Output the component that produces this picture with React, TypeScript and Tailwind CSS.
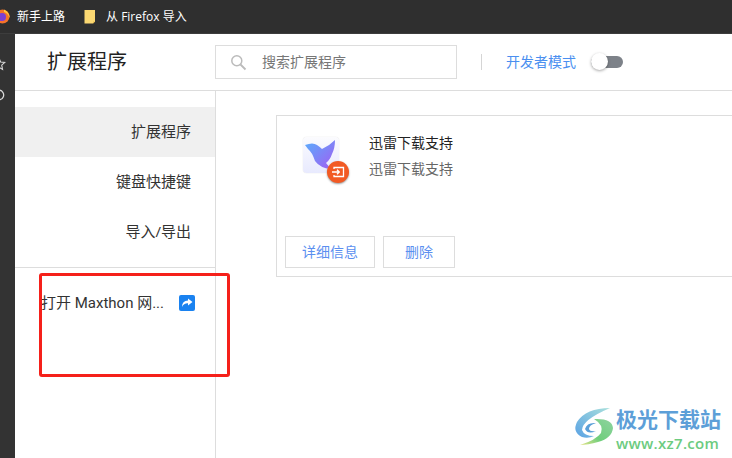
const font = {
  fontFamily: '"Open Sans", "Noto Sans CJK SC", sans-serif',
};

const BirdIcon = () => (
  <div className="relative w-[46px] h-[48px]">
    <div className="w-[36px] h-[36px] rounded-[4px] bg-gradient-to-b from-[#fbfbfe] to-[#e8eafe] shadow-[0_0_1px_#ccc]" />
    <svg className="absolute left-0 top-0" width="36" height="36" viewBox="0 0 36 36">
      <defs>
        <linearGradient id="bird" x1="0" y1="0" x2="1" y2="1">
          <stop offset="0" stopColor="#58aefc" />
          <stop offset="1" stopColor="#a35cf2" />
        </linearGradient>
      </defs>
      <path
        d="M2 8 Q10 5 14 8 Q17 10 19 12 Q26 9 32 3 Q32 11 29 17 Q27 23 23 26 L28 32 Q17 31 12 24 Q9 15 5 12 Z"
        fill="url(#bird)"
      />
    </svg>
    <div className="absolute left-[24px] top-[24px] w-[22px] h-[22px] rounded-full bg-[#f25a24] shadow-[0_1px_2px_#999] flex items-center justify-center">
      <svg width="14" height="12" viewBox="0 0 14 12" fill="none" stroke="#fff" strokeWidth="1.3">
        <path d="M3 3 V1.5 H12.5 V10.5 H3 V9" />
        <path d="M1 6 H8 M6 3.8 L8.3 6 L6 8.2" />
      </svg>
    </div>
  </div>
);

const App = () => {
  return (
    <div
      className="relative w-[732px] h-[458px] overflow-hidden bg-white flex flex-col"
      style={font}
    >
      {/* bookmark bar */}
      <div className="h-[34px] shrink-0 bg-[#2f2f2f] border-b border-[#3d3d3d] flex items-center text-white text-[12px]">
        <svg className="ml-[-5px]" width="15" height="15" viewBox="0 0 15 15">
          <circle cx="7.5" cy="7.5" r="7" fill="#f5732a" />
          <circle cx="7" cy="8" r="4" fill="#7b3fd6" />
          <path d="M9 0.5 Q15 4 14.5 9 Q13 4 9 3 Z" fill="#ffc93c" />
        </svg>
        <span className="ml-[7px]">新手上路</span>
        <svg className="ml-[19px]" width="12" height="15" viewBox="0 0 12 15">
          <path d="M0.5 1 H11 V12.5 L9 14.5 H0.5 Z" fill="#fbd872" />
          <path d="M9 14.5 V12.5 H11 Z" fill="#e8b94a" />
        </svg>
        <span className="ml-[10px]">从 Firefox 导入</span>
      </div>

      <div className="flex-1 flex min-h-0">
        {/* browser side strip */}
        <div className="w-[15px] shrink-0 bg-[#333333] flex flex-col items-end pt-[23px] gap-[17px] overflow-hidden">
          <svg className="mr-[9px] shrink-0" width="14" height="14" viewBox="0 0 12 13" fill="none" stroke="#d8d8d8" strokeWidth="1">
            <path d="M6 1 L7.5 4.6 L11.4 5 L8.5 7.6 L9.3 11.5 L6 9.5 L2.7 11.5 L3.5 7.6 L0.6 5 L4.5 4.6 Z" />
          </svg>
          <svg className="mr-[9px] shrink-0" width="14" height="14" viewBox="0 0 12 13" fill="none" stroke="#d8d8d8" strokeWidth="1.2">
            <path d="M6 1.5 V6 H1.5 M6 2 A4.5 4.5 0 1 1 3 10" />
          </svg>
        </div>

        <div className="flex-1 flex flex-col min-w-0">
          {/* header */}
          <div className="h-[57px] shrink-0 border-b border-[#dddddd] flex items-center">
            <div className="w-[200px] shrink-0 pl-[32px] text-[20px] leading-[28px] text-[#222222]">
              扩展程序
            </div>
            <div className="w-[242px] h-[34px] shrink-0 border border-[#dddddd] flex items-center pl-[14px]">
              <svg width="17" height="17" viewBox="0 0 17 17" fill="none" stroke="#bbbbbb" strokeWidth="1.5">
                <circle cx="6.8" cy="6.8" r="5" />
                <path d="M10.5 10.5 L15.5 15.5" strokeWidth="1.8" />
              </svg>
              <span className="ml-[15px] pb-[2px] text-[14px] text-[#777777]">搜索扩展程序</span>
            </div>
            <div className="ml-[24px] w-px h-[16px] bg-[#d5d5d5]" />
            <span className="ml-[24px] pb-[2px] text-[14px] text-[#4a8ff0]">开发者模式</span>
            {/* toggle */}
            <div className="relative ml-[15px] w-[32px] h-[12px] rounded-full bg-[#7d8289]">
              <div className="absolute left-0 top-[-3px] w-[17px] h-[17px] rounded-full bg-white shadow-[0_1px_3px_rgba(0,0,0,0.35)]" />
            </div>
          </div>

          <div className="flex-1 flex min-h-0">
            {/* sidebar */}
            <div className="w-[201px] shrink-0 border-r border-[#dddddd] pt-[16px] text-[15px] text-[#333333]">
              <div className="h-[50px] bg-[#f0f0f0] flex items-center justify-end pr-[24px] pb-[2px]">扩展程序</div>
              <div className="h-[50px] flex items-center justify-end pr-[24px] pb-[2px]">键盘快捷键</div>
              <div className="h-[50px] flex items-center justify-end pr-[24px] pb-[2px]">导入/导出</div>
              <div className="mt-[10px] border-t border-[#dddddd] h-[70px] flex items-center pl-[26px]">
                <span
                  className="w-[138px] pt-[2px] whitespace-nowrap overflow-hidden font-['Roboto','Noto_Sans_CJK_SC',sans-serif]"
                >
                  打开 Maxthon 网...
                </span>
                <div className="w-[16px] h-[16px] rounded-[2px] bg-[#1a82f0] flex items-center justify-center">
                  <svg width="12" height="10" viewBox="0 0 12 10" fill="#fff">
                    <path d="M7 0.5 L11.5 4 L7 7.5 V5.3 Q3 5 1 9 Q1 3 7 2.6 Z" />
                  </svg>
                </div>
              </div>
            </div>

            {/* extension card */}
            <div className="flex-1 pl-[60px] pt-[24px] overflow-hidden">
              <div className="w-[480px] h-[162px] border border-[#dddddd] flex flex-col pl-[8px]">
                <div className="flex pl-[18px] pt-[21px]">
                  <BirdIcon />
                  <div className="ml-[20px] mt-[-3px] text-[14px] leading-[18px]">
                    <div className="text-[#222222]">迅雷下载支持</div>
                    <div className="mt-[8px] text-[#666666]">迅雷下载支持</div>
                  </div>
                </div>
                <div className="mt-auto mb-[8px] flex gap-[8px] text-[14px] text-[#5b8ff0]">
                  <div className="w-[90px] h-[32px] border border-[#dddddd] flex items-center justify-center pb-[2px]">详细信息</div>
                  <div className="w-[72px] h-[32px] border border-[#dddddd] flex items-center justify-center pb-[2px]">删除</div>
                </div>
              </div>
            </div>
          </div>
        </div>
      </div>

      {/* red annotation */}
      <div className="absolute left-[39px] top-[273px] w-[191px] h-[104px] border-[3px] border-[#f5201a] rounded-[3px]" />

      {/* watermark */}
      <div className="absolute left-[572px] top-[402px] flex items-start">
        <svg width="44" height="50" viewBox="0 0 44 50" fill="none">
          <defs>
            <linearGradient id="wmGreen" x1="1" y1="0" x2="0" y2="1">
              <stop offset="0" stopColor="#8fd3a0" />
              <stop offset="0.6" stopColor="#6fce7c" />
              <stop offset="1" stopColor="#e8e58a" />
            </linearGradient>
            <linearGradient id="wmBlue" x1="1" y1="0" x2="0" y2="1">
              <stop offset="0" stopColor="#a9e0dc" />
              <stop offset="1" stopColor="#5aa2e4" />
            </linearGradient>
          </defs>
          <path d="M38 6 Q14 6 5 20 Q0 30 10 35 Q16 37 22 34 Q12 34 10 28 Q10 18 38 6 Z" fill="url(#wmBlue)" />
          <path d="M13 27 Q15 20 24 21 Q17 23 17 27 Q18 30 24 29 Q16 33 13 27 Z" fill="#5a9fd8" />
          <path d="M22 17 Q40 16 41 26 Q40 36 26 40 Q16 43 8 43 Q24 38 29 31 Q32 23 22 17 Z" fill="url(#wmGreen)" />
        </svg>
        <div className="flex flex-col pt-[4px]">
          <span className="text-[21px] leading-[27px] font-bold text-[#5d9fd8]">极光下载站</span>
          <span className="text-[15px] leading-[20px] font-semibold text-[#6ccb80] tracking-[0.3px]">www.xz7.com</span>
        </div>
      </div>
    </div>
  );
};

export default App;
